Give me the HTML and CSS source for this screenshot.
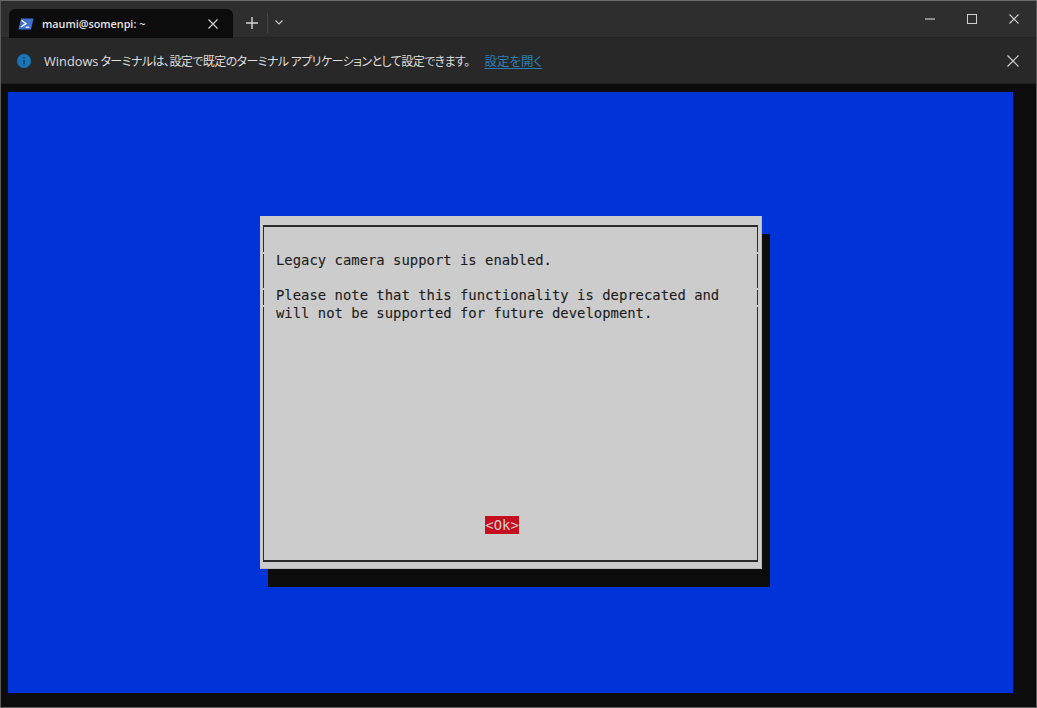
FILE: index.html
```html
<!DOCTYPE html>
<html lang="ja">
<head>
<meta charset="utf-8">
<title>maumi@somenpi: ~</title>
<link rel="stylesheet" href="styles.css">
</head>
<body>
<div class="window">
  <header class="titlebar">
    <div class="tab">
      <svg class="ps-icon" width="16" height="12" viewBox="0 0 16 12">
        <path d="M3 0.5H15.5L13 11.5H0.5Z" fill="#3f70d0"/>
        <path d="M3.6 2.2L8 5.6L2.8 9" fill="none" stroke="#fff" stroke-width="1.4"/>
        <path d="M7.6 9.2H11.4" fill="none" stroke="#fff" stroke-width="1.2"/>
      </svg>
      <span class="tab-title">maumi@somenpi: ~</span>
      <svg class="tab-close" width="10" height="10" viewBox="0 0 10 10">
        <path d="M0.5 0.5L9.5 9.5M9.5 0.5L0.5 9.5" stroke="#d4d4d4" stroke-width="1.1" fill="none"/>
      </svg>
    </div>
    <div class="tab-actions">
      <svg class="plus" width="12" height="12" viewBox="0 0 12 12">
        <path d="M6 0V12M0 6H12" stroke="#d6d6d6" stroke-width="1.4" fill="none"/>
      </svg>
      <span class="divider"></span>
      <svg class="chevron" width="8" height="5" viewBox="0 0 8 5">
        <path d="M0.5 0.5L4 4L7.5 0.5" stroke="#c8c8c8" stroke-width="1.1" fill="none"/>
      </svg>
    </div>
    <div class="window-controls">
      <svg class="minimize" width="10" height="2" viewBox="0 0 10 2">
        <path d="M0 1H10" stroke="#c9c9c9" stroke-width="1.2"/>
      </svg>
      <svg class="maximize" width="10" height="10" viewBox="0 0 10 10">
        <rect x="0.5" y="0.5" width="9" height="9" fill="none" stroke="#d0d0d0" stroke-width="1"/>
      </svg>
      <svg class="close" width="10" height="10" viewBox="0 0 10 10">
        <path d="M0.5 0.5L9.5 9.5M9.5 0.5L0.5 9.5" stroke="#d4d4d4" stroke-width="1.1" fill="none"/>
      </svg>
    </div>
  </header>
  <div class="infobar">
    <svg class="info-icon" width="14" height="14" viewBox="0 0 14 14">
      <circle cx="7" cy="7" r="7" fill="#1a76b8"/>
      <path d="M7 6V10.5" stroke="#0c2a40" stroke-width="1.2"/>
      <path d="M7 3.4V4.8" stroke="#0c2a40" stroke-width="1.2"/>
    </svg>
    <span class="info-text"><span class="latin">Windows</span> ターミナルは、設定で既定のターミナル アプリケーションとして設定できます。</span>
    <a class="info-link">設定を開く</a>
    <svg class="info-close" width="12" height="12" viewBox="0 0 12 12">
      <path d="M0.5 0.5L11.5 11.5M11.5 0.5L0.5 11.5" stroke="#d4d4d4" stroke-width="1.1" fill="none"/>
    </svg>
  </div>
  <main class="terminal">
    <div class="screen">
      <div class="dialog">
        <div class="frame">
          <span class="notch notch-l1"></span>
          <span class="notch notch-l2"></span>
          <span class="notch notch-l3"></span>
          <span class="notch notch-r1"></span>
          <span class="notch notch-r2"></span>
          <span class="notch notch-r3"></span>
          <pre class="message">
Legacy camera support is enabled.

Please note that this functionality is deprecated and
will not be supported for future development.</pre>
          <div class="actions"><span class="ok">&lt;Ok&gt;</span></div>
        </div>
      </div>
    </div>
  </main>
</div>
</body>
</html>
```
FILE: styles.css
```css
* { box-sizing: border-box; }
html, body { margin: 0; padding: 0; background: #0c0c0c; overflow: hidden; }
.window {
  width: 1037px;
  height: 708px;
  display: flex;
  flex-direction: column;
  border-top: 1px solid #6a6a6a;
  border-left: 1px solid #5a5a5a;
  border-right: 1px solid #5a5a5a;
  border-bottom: 1px solid #5e5e5e;
  background: #0c0c0c;
}
.titlebar {
  height: 37px;
  display: flex;
  align-items: flex-end;
  background: #2e2e2e;
  flex: none;
  border-bottom: 1px solid #232323;
}
.tab {
  width: 224px;
  height: 29px;
  margin-left: 8px;
  margin-bottom: -1px;
  background: #0c0c0c;
  border-radius: 6px 6px 0 0;
  display: flex;
  align-items: center;
  padding-left: 9px;
  color: #e4e4e4;
  font: 600 10.8px "Open Sans", "Liberation Sans", sans-serif;
}
.ps-icon { flex: none; margin-right: 8px; }
.tab-title { flex: 1; }
.tab-close { flex: none; margin-right: 15px; }
.tab-actions {
  display: flex;
  align-items: center;
  height: 29px;
  margin-left: 13px;
}
.divider { width: 1px; height: 20px; background: #444; margin: 0 7px 0 9px; }
.window-controls {
  margin-left: auto;
  align-self: flex-start;
  display: flex;
  align-items: center;
  height: 37px;
  padding-bottom: 2px;
  gap: 32px;
  padding-right: 17px;
}
.infobar {
  height: 46px;
  flex: none;
  display: flex;
  align-items: center;
  background: #282828;
  padding-left: 16px;
  color: #dedede;
  font: 12px "Noto Sans CJK JP", "Open Sans", sans-serif;
  font-feature-settings: "palt";
  border-bottom: 1px solid #202020;
}
.info-icon { flex: none; margin-right: 13px; }
.info-text { white-space: nowrap; letter-spacing: -0.58px; }
.latin { font: 12.8px "Open Sans", sans-serif; letter-spacing: 0; }
.info-link {
  margin-left: 15px;
  color: #2c7fb8;
  font-size: 12.5px;
  text-decoration: underline;
  text-underline-offset: 2px;
}
.info-close { margin-left: auto; margin-right: 17px; flex: none; }
.terminal {
  flex: 1;
  min-height: 0;
  padding: 8px 0 0 7px;
}
.screen {
  width: 1005px;
  height: 601px;
  background: #0033d8;
  padding: 124px 0 0 252px;
}
.dialog {
  width: 502px;
  height: 353px;
  background: #cccccc;
  border-right: 1px solid #b8b8b8;
  border-bottom: 1px solid #b8b8b8;
  box-shadow: 8px 18px 0 #0c0c0c;
  padding: 9px 3px 6px 3px;
}
.frame {
  position: relative;
  width: 495px;
  height: 337px;
  border: 2px solid #2a2a2a;
  border-left-width: 1px;
  border-right-width: 1px;
  display: flex;
  flex-direction: column;
}
.notch { position: absolute; width: 1px; height: 2px; background: #cccccc; }
.notch-l1, .notch-l2, .notch-l3 { left: -1px; }
.notch-r1, .notch-r2, .notch-r3 { right: -1px; }
.notch-l1, .notch-r1 { top: 25px; }
.notch-l2, .notch-r2 { top: 61px; }
.notch-l3, .notch-r3 { top: 78px; }
.message {
  margin: 0;
  padding: 25px 0 0 12px;
  font: 13.9px/17.65px "DejaVu Sans Mono", monospace;
  color: #1c1c1c;
  -webkit-text-stroke: 0.1px #1c1c1c;
  flex: 1;
}
.actions {
  display: flex;
  padding: 0 0 26px 221px;
}
.ok {
  background: #c50f1f;
  color: #cccccc;
  padding: 0 0.3px;
  font: 13.9px/18px "DejaVu Sans Mono", monospace;
}
```
